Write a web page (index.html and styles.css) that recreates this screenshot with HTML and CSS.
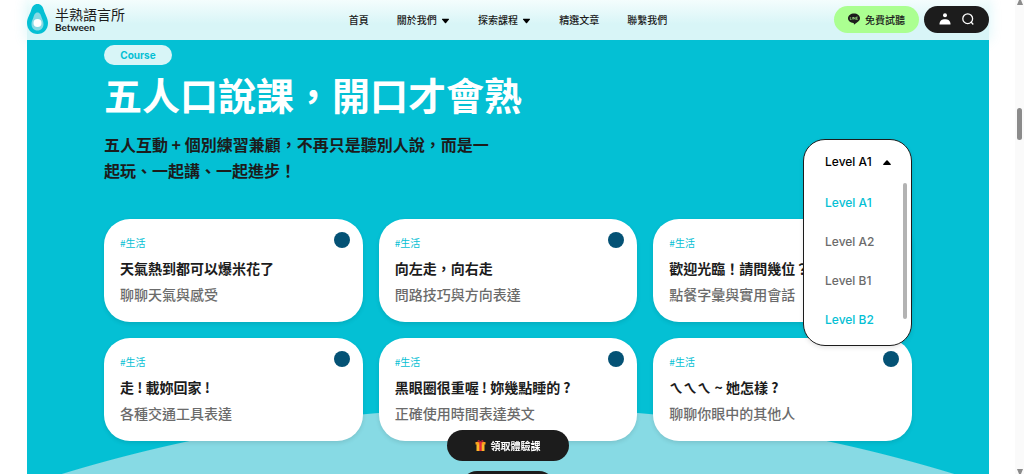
FILE: index.html
```html
<!DOCTYPE html>
<html lang="zh-Hant">
<head>
	<meta charset="utf-8">
	<meta name="viewport" content="width=device-width, initial-scale=1">
	<title>半熟語言所 Between</title>
	<link rel="stylesheet" href="styles.css">
</head>
<body>
	<div class="page">
		<header class="header">
			<a class="logo" href="#">
				<svg class="logo-mark" viewBox="0 0 21 30" aria-hidden="true">
					<path d="M10.500 0C14 0 15.800 2.500 16.800 6C17.800 10 21 14 21 19C21 25.500 16.500 30 10.500 30S0 25.500 0 19C0 14 3.200 10 4.200 6C5.200 2.500 7 0 10.500 0Z" fill="#04c0d4"/>
					<path d="M10.500 8.500C13 8.500 13.800 11 14.600 13.500C15.300 15.500 16.500 17 16.500 20C16.500 24 14 26.500 10.500 26.500S4.500 24 4.500 20C4.500 17 5.700 15.500 6.400 13.500C7.200 11 8 8.500 10.500 8.500Z" fill="#87dae4"/>
					<circle cx="10.500" cy="19" r="4" fill="#fff"/>
				</svg>
				<span class="logo-text">
					<span class="logo-zh">半熟語言所</span>
					<span class="logo-en">Between</span>
				</span>
			</a>
			<nav class="nav">
				<a href="#">首頁</a>
				<a href="#">關於我們 <svg class="caret" viewBox="0 0 8 5" aria-hidden="true"><path d="M1.200 .5H6.800Q7.400 .6 7 1.200L4.500 4.200Q4 4.700 3.500 4.200L1 1.200Q.6 .6 1.200 .5Z"/></svg></a>
				<a href="#">探索課程 <svg class="caret" viewBox="0 0 8 5" aria-hidden="true"><path d="M1.200 .5H6.800Q7.400 .6 7 1.200L4.500 4.200Q4 4.700 3.500 4.200L1 1.200Q.6 .6 1.200 .5Z"/></svg></a>
				<a href="#">精選文章</a>
				<a href="#">聯繫我們</a>
			</nav>
			<div class="actions">
				<a class="line-btn" href="#">
					<svg class="line-icon" viewBox="0 0 12 12" aria-hidden="true">
						<path d="M6 .5C9.300 .5 12 2.600 12 5.300C12 8 8.500 10 6 11.800C5.800 11 6 10.200 5.500 10.100C2.300 9.800 0 7.800 0 5.300C0 2.600 2.700 .5 6 .5Z" fill="#1c1c1c"/>
						<path d="M2.300 4V6.500H3.500M4.400 4V6.500M5.500 6.500V4L7.200 6.500V4M9.700 4H8.400V6.500H9.700M8.400 5.200H9.500" fill="none" stroke="#abff91" stroke-width=".6"/>
					</svg>
					免費試聽
				</a>
				<div class="tools">
					<button type="button" aria-label="會員">
						<svg viewBox="0 0 12 12"><circle class="solid" cx="6" cy="2.300" r="2"/><path class="solid" d="M.5 11.500V10.800C.7 7.600 3 6.200 6 6.200S11.300 7.600 11.500 10.800V11.500Z"/></svg>
					</button>
					<button type="button" aria-label="搜尋">
						<svg viewBox="0 0 12 12"><circle cx="5.700" cy="5.700" r="4.900"/><path d="M8.800 8.800L11.300 11.500"/></svg>
					</button>
				</div>
			</div>
		</header>

		<main class="hero">
			<span class="label">Course</span>
			<h1>五人口說課，開口才會熟</h1>
			<div class="intro">
				<p>五人互動 + 個別練習兼顧，不再只是聽別人說，而是一起玩、一起講、一起進步！</p>
				<div class="level">
					<div class="level-current">
						<select aria-label="Level">
							<option>Level A1</option>
							<option>Level A2</option>
							<option>Level B1</option>
							<option>Level B2</option>
						</select>
						<svg class="level-arrow" viewBox="0 0 8 5" aria-hidden="true"><path d="M.6 5Q-.2 4.800 .3 4.100L3.400 .5Q4 0 4.600 .5L7.700 4.100Q8.200 4.800 7.400 5Z"/></svg>
					</div>
					<div class="level-menu">
						<div class="level-list">
							<button type="button" class="on">Level A1</button>
							<button type="button">Level A2</button>
							<button type="button">Level B1</button>
							<button type="button" class="on">Level B2</button>
						</div>
						<div class="level-bar"></div>
					</div>
				</div>
			</div>

			<div class="cards">
				<article class="card">
					<div class="card-top"><span class="tag">#生活</span><i class="dot"></i></div>
					<h2>天氣熱到都可以爆米花了</h2>
					<p>聊聊天氣與感受</p>
				</article>
				<article class="card">
					<div class="card-top"><span class="tag">#生活</span><i class="dot"></i></div>
					<h2>向左走，向右走</h2>
					<p>問路技巧與方向表達</p>
				</article>
				<article class="card">
					<div class="card-top"><span class="tag">#生活</span><i class="dot"></i></div>
					<h2>歡迎光臨！請問幾位？</h2>
					<p>點餐字彙與實用會話</p>
				</article>
				<article class="card">
					<div class="card-top"><span class="tag">#生活</span><i class="dot"></i></div>
					<h2>走 ! 載妳回家 !</h2>
					<p>各種交通工具表達</p>
				</article>
				<article class="card">
					<div class="card-top"><span class="tag">#生活</span><i class="dot"></i></div>
					<h2>黑眼圈很重喔 ! 妳幾點睡的 ?</h2>
					<p>正確使用時間表達英文</p>
				</article>
				<article class="card">
					<div class="card-top"><span class="tag">#生活</span><i class="dot"></i></div>
					<h2>ㄟㄟㄟ ~ 她怎樣 ?</h2>
					<p>聊聊你眼中的其他人</p>
				</article>
			</div>
		</main>
	</div>

	<div class="floating">
		<a class="trial" href="#">
			<svg class="gift" viewBox="0 0 10 11" aria-hidden="true">
				<path d="M1 4H9V11H1Z" fill="#fbb829"/>
				<path d="M0 2H10V4.500H0Z" fill="#f9a11b"/>
				<path d="M3.800 2H6.200V11H3.800Z" fill="#e0263c"/>
				<path d="M5 2.500C3 2.500 2 1.500 2.500 .7S4.500 .8 5 2.500C5.500 .8 7 0 7.500 .7S7 2.500 5 2.500Z" fill="none" stroke="#e0263c"/>
			</svg>
			領取體驗課
		</a>
		<div class="next-pill"></div>
	</div>

	<div class="scrollbar" aria-hidden="true">
		<svg viewBox="0 0 6 5"><path d="M0 5L2 0H4L6 5Z"/></svg>
		<div class="thumb"></div>
		<svg viewBox="0 0 6 5"><path d="M0 0H6L4 5H2Z"/></svg>
	</div>
</body>
</html>
```

FILE: styles.css
```css
* {
	box-sizing: border-box;
}

body {
	margin: 0;
	overflow: hidden;
	background: #fff;
	color: #1c1c1c;
	font-family: "Noto Sans CJK TC", sans-serif;
	font-size: 10px;
}

a {
	color: inherit;
	text-decoration: none;
}

button {
	border: 0;
	padding: 0;
	background: none;
	cursor: pointer;
}

h1, h2, p {
	margin: 0;
}

.page {
	height: 100vh;
	padding: 0 35px 0 27px;
	display: flex;
	flex-direction: column;
}

/* header */
.header {
	height: 40px;
	flex: none;
	padding-bottom: 2px;
	display: grid;
	grid-template-columns: 1fr auto 1fr;
	align-items: center;
	background: linear-gradient(#f4fdfd, #d8f5f7 60%);
	box-shadow: 0 0 14px rgba(4, 192, 212, 0.16);
}

.logo {
	display: flex;
	align-items: center;
	gap: 7px;
}

.logo-mark {
	width: 21px;
	height: 30px;
}

.logo-text {
	display: flex;
	flex-direction: column;
}

.logo-zh {
	font-size: 14px;
	line-height: 16px;
}

.logo-en {
	font-family: Lato, sans-serif;
	font-size: 10px;
	line-height: 10px;
	font-weight: bold;
}

.nav {
	display: flex;
	gap: 28px;
	font-weight: 500;
}

.caret {
	width: 9px;
	height: 6px;
	margin-left: 2px;
}

.actions {
	display: flex;
	justify-content: flex-end;
	gap: 5px;
}

.line-btn {
	height: 27px;
	padding: 0 14px;
	display: flex;
	align-items: center;
	gap: 5px;
	border-radius: 14px;
	background: #abff91;
	font-weight: 500;
}

.line-icon {
	width: 12px;
	height: 12px;
}

.tools {
	height: 27px;
	padding: 0 15px;
	display: flex;
	align-items: center;
	gap: 11px;
	border-radius: 14px;
	background: #1c1c1c;
}

.tools svg {
	display: block;
	width: 12px;
	height: 12px;
	fill: none;
	stroke: #fff;
	stroke-width: 1.3;
}

.tools .solid {
	fill: #fff;
	stroke: none;
}

/* hero */
.hero {
	position: relative;
	flex: 1;
	padding: 5px 8% 0;
	background: radial-gradient(circle at 50% 1898px, #87dae4 1530px, #04c0d4 1531px);
}

.label {
	display: block;
	width: 68px;
	height: 20px;
	border-radius: 10px;
	background: #d8f5f7;
	color: #04c0d4;
	font: bold 10px/20px Inter, sans-serif;
	text-align: center;
}

h1 {
	margin-top: 6px;
	color: #fff;
	font-size: 38px;
	line-height: 46px;
}

.intro {
	position: relative;
	margin-top: 14px;
}

.intro p {
	max-width: 400px;
	font-size: 16px;
	line-height: 26px;
	font-weight: bold;
}

/* level picker opens over the cards */
.level {
	position: absolute;
	top: 8px;
	right: 0;
	width: 109px;
	height: 207px;
	padding: 12px 4px 0 21px;
	border: 1px solid #1c1c1c;
	border-radius: 22px;
	background: #fff;
	box-shadow: 0 2px 4px rgba(0, 0, 0, 0.1);
}

.level select,
.level button {
	font: 500 12px/20px Inter, sans-serif;
}

.level-current {
	display: flex;
	align-items: center;
	gap: 8px;
}

.level select {
	appearance: none;
	border: 0;
	padding: 0;
	background: none;
	color: #000;
}

.level-arrow {
	width: 8px;
	height: 5px;
}

.level-menu {
	margin-top: 11px;
	height: 136px;
	display: flex;
	justify-content: space-between;
}

.level-list {
	padding-top: 10px;
	display: flex;
	flex-direction: column;
	align-items: flex-start;
	gap: 19px;
}

.level-list button {
	flex: none;
	color: #6b6b6b;
}

.level-list .on {
	color: #04c0d4;
}

.level-bar {
	width: 4px;
	border-radius: 2px;
	background: #b3b3b3;
}

/* cards */
.cards {
	margin-top: 36px;
	display: grid;
	grid-template-columns: repeat(3, 1fr);
	gap: 16px;
}

.card {
	padding: 13px 13px 14px 16px;
	border-radius: 26px;
	background: #fff;
	box-shadow: 0 2px 4px rgba(0, 0, 0, 0.1);
}

.card-top {
	display: flex;
	justify-content: space-between;
}

.tag {
	padding-top: 3px;
	color: #04c0d4;
	font-size: 10px;
	line-height: 16px;
}

.dot {
	width: 16px;
	height: 16px;
	border-radius: 50%;
	background: #045275;
}

.card h2 {
	margin-top: 4px;
	font-size: 14px;
	line-height: 26px;
}

.card p {
	color: #6b6b6b;
	font-size: 14px;
	line-height: 27px;
	font-weight: 500;
}

/* floating call to action */
.floating {
	position: fixed;
	bottom: -18px;
	left: 0;
	right: 9px;
	display: flex;
	flex-direction: column;
	align-items: center;
	gap: 10px;
}

.trial {
	height: 31px;
	padding: 0 28px;
	display: flex;
	align-items: center;
	gap: 5px;
	border-radius: 16px;
	background: #1c1c1c;
	color: #fff;
	font-weight: bold;
}

.gift {
	width: 11px;
	height: 11px;
}

.next-pill {
	width: 94px;
	height: 21px;
	border-radius: 16px 16px 0 0;
	background: #1c1c1c;
}

/* scrollbar */
.scrollbar {
	position: fixed;
	top: 0;
	right: 0;
	bottom: 0;
	width: 9px;
	display: flex;
	flex-direction: column;
	align-items: center;
	background: #fafafa;
}

.scrollbar svg {
	width: 6px;
	height: 5px;
	fill: #8b8b8b;
}

.thumb {
	width: 5px;
	height: 32px;
	margin: 103px 0 auto;
	border-radius: 3px;
	background: #8b8b8b;
}
```
